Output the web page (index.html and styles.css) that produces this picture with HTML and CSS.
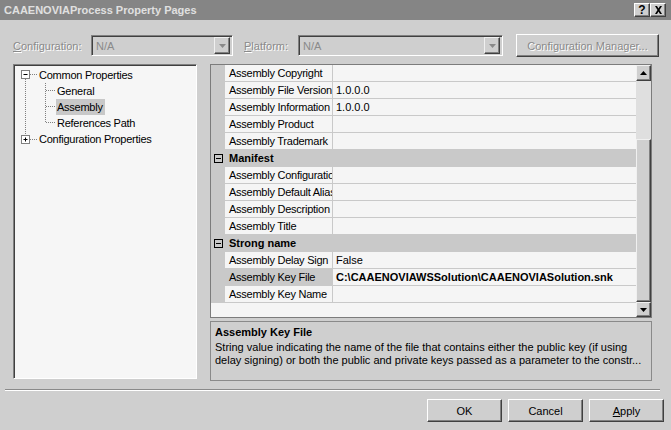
FILE: index.html
```html
<!DOCTYPE html>
<html lang="en">
  <head>
    <meta charset="UTF-8" />
    <title>CAAENOVIAProcess Property Pages</title>
    <link rel="stylesheet" href="styles.css">
  </head>
  <body>
    <div class="dialog">
      <!-- title bar -->
      <div class="titlebar">
        <span class="title">CAAENOVIAProcess Property Pages</span>
        <div class="capBtns">
          <span class="capBtn">?</span>
          <span class="capBtn">
            <svg width="9" height="8" viewBox="0 0 9 8"><path d="M1 0h2l1.5 2.5L6 0h2L5.5 4 8 8H6L4.5 5.5 3 8H1l2.5-4z" fill="#000"/></svg>
          </span>
        </div>
      </div>

      <!-- configuration row -->
      <div class="toolbar">
        <span class="lbl lblCfg"><u>C</u>onfiguration:</span>
        <div class="combo comboCfg">
          <span class="comboText">N/A</span>
          <span class="comboDrop"><svg width="7" height="4" viewBox="0 0 7 4"><path d="M0 0h7L3.5 4z" fill="#8a8a8a"/></svg></span>
        </div>
        <span class="lbl lblPlat"><u>P</u>latform:</span>
        <div class="combo comboPlat">
          <span class="comboText">N/A</span>
          <span class="comboDrop"><svg width="7" height="4" viewBox="0 0 7 4"><path d="M0 0h7L3.5 4z" fill="#8a8a8a"/></svg></span>
        </div>
        <span class="btn cfgBtn">Configuration Manager...</span>
      </div>

      <div class="main">
        <!-- tree -->
        <div class="tree">
          <div class="treeRow">
            <svg class="conn" width="24" height="16" viewBox="0 0 24 16">
              <rect x="7.5" y="3.5" width="8" height="8" fill="#fff" stroke="#808080"/>
              <path d="M9.5 7.5h4" stroke="#000"/>
              <path d="M16 7.5h7M11.5 12v4" stroke="#808080" stroke-dasharray="1 1"/>
            </svg>
            <span class="treeText">Common Properties</span>
          </div>
          <div class="treeRow">
            <svg class="conn" width="42" height="16" viewBox="0 0 42 16">
              <path d="M11.5 0v16M31.5 0v16M32 7.5h9" stroke="#808080" stroke-dasharray="1 1"/>
            </svg>
            <span class="treeText">General</span>
          </div>
          <div class="treeRow">
            <svg class="conn" width="42" height="16" viewBox="0 0 42 16">
              <path d="M11.5 0v16M31.5 0v16M32 7.5h9" stroke="#808080" stroke-dasharray="1 1"/>
            </svg>
            <span class="treeText selected">Assembly</span>
          </div>
          <div class="treeRow">
            <svg class="conn" width="42" height="16" viewBox="0 0 42 16">
              <path d="M11.5 0v16M31.5 0v8M32 7.5h9" stroke="#808080" stroke-dasharray="1 1"/>
            </svg>
            <span class="treeText">References Path</span>
          </div>
          <div class="treeRow">
            <svg class="conn" width="24" height="16" viewBox="0 0 24 16">
              <path d="M11.5 0v4" stroke="#808080" stroke-dasharray="1 1"/>
              <rect x="7.5" y="4.5" width="8" height="8" fill="#fff" stroke="#808080"/>
              <path d="M9.5 8.5h4M11.5 6.5v4" stroke="#000"/>
              <path d="M16 8.5h7" stroke="#808080" stroke-dasharray="1 1"/>
            </svg>
            <span class="treeText">Configuration Properties</span>
          </div>
        </div>

        <div class="rightCol">
          <!-- property grid -->
          <div class="grid">
            <div class="rows">
              <div class="row"><span class="gutter"></span><span class="name">Assembly Copyright</span><span class="value"></span></div>
              <div class="row"><span class="gutter"></span><span class="name">Assembly File Version</span><span class="value">1.0.0.0</span></div>
              <div class="row"><span class="gutter"></span><span class="name">Assembly Information</span><span class="value">1.0.0.0</span></div>
              <div class="row"><span class="gutter"></span><span class="name">Assembly Product</span><span class="value"></span></div>
              <div class="row"><span class="gutter"></span><span class="name">Assembly Trademark</span><span class="value"></span></div>
              <div class="row category">
                <span class="gutter"><svg width="9" height="9" viewBox="0 0 9 9"><rect x="0.5" y="0.5" width="8" height="8" fill="none" stroke="#000"/><path d="M2 4.5h5" stroke="#000"/></svg></span>
                <span class="catName">Manifest</span>
              </div>
              <div class="row"><span class="gutter"></span><span class="name">Assembly Configuration</span><span class="value"></span></div>
              <div class="row"><span class="gutter"></span><span class="name">Assembly Default Alias</span><span class="value"></span></div>
              <div class="row"><span class="gutter"></span><span class="name">Assembly Description</span><span class="value"></span></div>
              <div class="row"><span class="gutter"></span><span class="name">Assembly Title</span><span class="value"></span></div>
              <div class="row category">
                <span class="gutter"><svg width="9" height="9" viewBox="0 0 9 9"><rect x="0.5" y="0.5" width="8" height="8" fill="none" stroke="#000"/><path d="M2 4.5h5" stroke="#000"/></svg></span>
                <span class="catName">Strong name</span>
              </div>
              <div class="row"><span class="gutter"></span><span class="name">Assembly Delay Sign</span><span class="value">False</span></div>
              <div class="row"><span class="gutter"></span><span class="name selName">Assembly Key File</span><span class="value bold">C:\CAAENOVIAWSSolution\CAAENOVIASolution.snk</span></div>
              <div class="row"><span class="gutter"></span><span class="name">Assembly Key Name</span><span class="value"></span></div>
              <div class="rowsEmpty"></div>
            </div>
            <div class="vscroll">
              <span class="sbBtn"><svg width="7" height="4" viewBox="0 0 7 4"><path d="M3.5 0L7 4H0z" fill="#000"/></svg></span>
              <span class="sbTrack"></span>
              <span class="sbThumb"></span>
              <span class="sbBtn sbDown"><svg width="7" height="4" viewBox="0 0 7 4"><path d="M0 0h7L3.5 4z" fill="#000"/></svg></span>
            </div>
          </div>

          <!-- description -->
          <div class="desc">
            <div class="descTitle">Assembly Key File</div>
            <div class="descText">String value indicating the name of the file that contains either the public key (if using delay signing) or both the public and private keys passed as a parameter to the constr...</div>
          </div>
        </div>
      </div>

      <div class="sep"></div>

      <div class="buttons">
        <span class="btn dlgBtn">OK</span>
        <span class="btn dlgBtn">Cancel</span>
        <span class="btn dlgBtn"><u>A</u>pply</span>
      </div>
    </div>
  </body>
</html>
```

FILE: styles.css
```css
* {
  margin: 0;
  padding: 0;
  box-sizing: border-box;
}
body {
  width: 671px;
  height: 430px;
  overflow: hidden;
  background: #cfcfcf;
  font: 11px "Liberation Sans", Arial, sans-serif;
  color: #000;
}
.dialog {
  width: 671px;
  height: 430px;
  display: flex;
  flex-direction: column;
}
.titlebar {
  height: 20px;
  background: #858585;
  display: flex;
  align-items: center;
  padding: 0 5px 0 4px;
}
.title {
  flex: 1;
  color: #e0e0e0;
  font-weight: bold;
  font-size: 11px;
}
.capBtns {
  display: flex;
}
.capBtn {
  width: 16px;
  height: 14px;
  display: flex;
  align-items: center;
  justify-content: center;
  background: #cfcfcf;
  border: 1px solid;
  border-color: #fff #404040 #404040 #fff;
  box-shadow: inset -1px -1px #808080;
  font-weight: bold;
  font-size: 12px;
}

/* configuration row */
.toolbar {
  height: 23px;
  margin-top: 14px;
  display: flex;
  align-items: center;
}
.lbl {
  color: #8a8a8a;
  text-shadow: 1px 1px 0 #fff;
}
.lblCfg {
  margin-left: 13px;
  width: 78px;
}
.lblPlat {
  margin-left: 11px;
  width: 54px;
}
.combo {
  height: 21px;
  display: flex;
  align-items: center;
  border: 1px solid;
  border-color: #808080 #fff #fff #808080;
  box-shadow: inset 1px 1px #404040, inset -1px -1px #cfcfcf;
  padding: 2px;
}
.comboCfg {
  width: 142px;
}
.comboPlat {
  width: 205px;
}
.comboText {
  flex: 1;
  color: #8a8a8a;
  padding-left: 2px;
}
.comboDrop {
  width: 16px;
  height: 17px;
  display: flex;
  align-items: center;
  justify-content: center;
  border: 1px solid;
  border-color: #f0f0f0 #404040 #404040 #f0f0f0;
  box-shadow: inset -1px -1px #808080;
}
.btn {
  display: flex;
  align-items: center;
  justify-content: center;
  height: 23px;
  background: #cfcfcf;
  border: 1px solid;
  border-color: #fff #404040 #404040 #fff;
  box-shadow: inset -1px -1px #808080;
}
.cfgBtn {
  width: 143px;
  margin-left: 13px;
  color: #8a8a8a;
  text-shadow: 1px 1px 0 #fff;
}

/* tree and grid */
.main {
  display: flex;
  gap: 13px;
  margin-top: 7px;
  padding-left: 13px;
}
.tree {
  width: 184px;
  height: 315px;
  background: #f6f6f6;
  border: 1px solid;
  border-color: #808080 #fff #fff #808080;
  box-shadow: inset 1px 1px #404040;
  padding: 2px 0 0 0;
}
.treeRow {
  height: 16px;
  display: flex;
  align-items: center;
}
.conn {
  flex-shrink: 0;
}
.treeText {
  padding: 0 2px 0 1px;
  line-height: 16px;
  letter-spacing: -0.25px;
}
.treeText.selected {
  background: #c8c8c8;
}
.rightCol {
  width: 442px;
  display: flex;
  flex-direction: column;
  gap: 3px;
}
.grid {
  height: 254px;
  border: 1px solid #7c7c7c;
  display: flex;
}
.rows {
  width: 425px;
  display: flex;
  flex-direction: column;
}
.row {
  height: 17px;
  display: flex;
  border-bottom: 1px solid #c9c9c9;
}
.gutter {
  width: 14px;
  background: #c9c9c9;
  display: flex;
  align-items: center;
  justify-content: center;
  flex-shrink: 0;
}
.name {
  width: 108px;
  flex-shrink: 0;
  padding-left: 4px;
  border-right: 1px solid #c9c9c9;
  background: #f5f5f5;
  white-space: nowrap;
  overflow: hidden;
  line-height: 16px;
  letter-spacing: -0.25px;
}
.name.selName {
  background: #c9c9c9;
}
.value {
  flex: 1;
  padding-left: 3px;
  background: #f5f5f5;
  white-space: nowrap;
  overflow: hidden;
  line-height: 16px;
}
.bold {
  font-weight: bold;
}
.category {
  background: #c9c9c9;
}
.catName {
  padding-left: 4px;
  font-weight: bold;
  line-height: 16px;
}
.rowsEmpty {
  flex: 1;
  background: #f5f5f5;
}
.vscroll {
  width: 15px;
  display: flex;
  flex-direction: column;
}
.sbBtn {
  height: 16px;
  display: flex;
  align-items: center;
  justify-content: center;
  background: #cfcfcf;
  border: 1px solid;
  border-color: #f0f0f0 #404040 #404040 #f0f0f0;
  box-shadow: inset -1px -1px #808080;
}
.sbDown {
  height: 15px;
}
.sbTrack {
  height: 58px;
  background-color: #e6e6e6;
  background-image: radial-gradient(#cfcfcf 0.5px, transparent 0.8px);
  background-size: 2px 2px;
}
.sbThumb {
  flex: 1;
  background: #cfcfcf;
  border: 1px solid;
  border-color: #f0f0f0 #404040 #404040 #f0f0f0;
  box-shadow: inset -1px -1px #808080;
}
.desc {
  height: 60px;
  border: 1px solid #8a8a8a;
  padding: 4px 4px 0 4px;
}
.descTitle {
  font-weight: bold;
  line-height: 13px;
}
.descText {
  margin-top: 2px;
  line-height: 13px;
}

/* bottom */
.sep {
  margin: 8px 0 0 5px;
  width: 655px;
  height: 2px;
  border-top: 1px solid #8a8a8a;
  border-bottom: 1px solid #fff;
}
.buttons {
  display: flex;
  justify-content: flex-end;
  gap: 6px;
  margin-top: 8px;
  padding-right: 7px;
}
.dlgBtn {
  width: 75px;
}
```
